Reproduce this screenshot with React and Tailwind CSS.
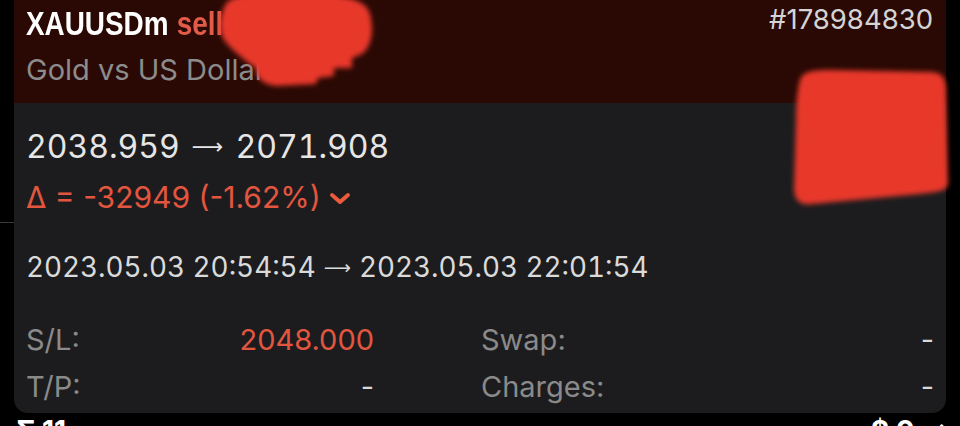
import React from "react";

const inter = { fontFamily: "Inter, 'Liberation Sans', sans-serif" };
const lib = { fontFamily: "'Liberation Sans', Arial, sans-serif" };
const dv = { fontFamily: "'DejaVu Sans', sans-serif" };

function Arrow({ cls }) {
  return (
    <span className={cls} style={dv}>
      ⟶
    </span>
  );
}

function Blobs() {
  return (
    <svg
      className="absolute left-0 top-0 pointer-events-none"
      width="960"
      height="426"
      viewBox="0 0 960 426"
    >
      <defs>
        <filter id="bl" x="-20%" y="-20%" width="140%" height="140%">
          <feGaussianBlur stdDeviation="2.5" />
        </filter>
      </defs>
      <g fill="#e8392b" filter="url(#bl)">
        <path d="M224 8 C228 -6 256 -8 300 -6 C340 -6 366 -2 370 14 C374 30 372 46 362 54 L352 58 L352 68 L334 68 L334 76 L318 78 L316 84 L276 86 C262 84 256 78 256 68 C244 60 232 50 224 40 C218 30 220 16 224 8 Z" />
        <path d="M800 80 C802 72 812 70 830 70 L930 72 C942 72 946 78 946 90 L948 184 C946 192 936 192 920 194 L812 204 C798 206 794 198 794 188 L796 120 C796 100 798 88 800 80 Z" />
      </g>
    </svg>
  );
}

export default function App() {
  return (
    <div className="relative w-[960px] h-[426px] overflow-hidden bg-black">
      <div className="absolute left-0 top-[222px] w-[14px] h-px bg-[#3a3a3a]" />
      <div className="px-[14px]">
        <div className="h-[413px] bg-[#1c1c1e] rounded-b-[14px] overflow-hidden">
          <div className="h-[103px] bg-[#2a0904] pl-[12px] pr-[13px] flex justify-between items-start">
            <div className="flex flex-col">
              <div
                className="mt-[6px] text-[34px] leading-none font-bold flex gap-[10px] origin-left scale-x-[0.82] whitespace-nowrap"
                style={lib}
              >
                <span className="text-white">XAUUSDm</span>
                <span className="text-[#e25a48]">sell</span>
              </div>
              <div className="mt-[15px] text-[29px] leading-none text-[#8c8c8c]" style={inter}>
                Gold vs US Dollar
              </div>
            </div>
            <div className="mt-[6px] text-[27.5px] leading-none text-[#d4d4d4]" style={inter}>
              #178984830
            </div>
          </div>
          <div className="px-[12px]" style={inter}>
            <div className="pt-[28px] text-[32px] leading-none text-[#e6e6e6] whitespace-nowrap flex items-baseline tabular-nums">
              <span>2038.959</span>
              <Arrow cls="text-[22px] mx-[12px] relative top-[-4px]" />
              <span>2071.908</span>
            </div>
            <div className="mt-[19px] flex items-center text-[30px] leading-none text-[#e2563f]">
              <span>Δ = -32949 (-1.62%)</span>
              <svg width="22" height="14" viewBox="0 0 22 14" className="ml-[8px] mt-[4px]">
                <polyline points="3,3 11,10 19,3" fill="none" stroke="#ea5a3c" strokeWidth="4" strokeLinecap="round" strokeLinejoin="round" />
              </svg>
            </div>
            <div className="mt-[42px] text-[27.8px] leading-none text-[#dadada] whitespace-nowrap flex items-baseline tabular-nums">
              <span>2023.05.03 20:54:54</span>
              <Arrow cls="text-[19px] mx-[8px] relative top-[-3px]" />
              <span>2023.05.03 22:01:54</span>
            </div>
            <div className="mt-[43px] grid grid-cols-[348px_1fr] gap-x-[107px] gap-y-[18px] text-[29px] leading-none">
              <div className="flex justify-between">
                <span className="text-[#8a8a8a]">S/L:</span>
                <span className="text-[#e2563f]">2048.000</span>
              </div>
              <div className="flex justify-between">
                <span className="text-[#8a8a8a]">Swap:</span>
                <span className="text-[#dadada]">-</span>
              </div>
              <div className="flex justify-between">
                <span className="text-[#8a8a8a]">T/P:</span>
                <span className="text-[#dadada]">-</span>
              </div>
              <div className="flex justify-between">
                <span className="text-[#8a8a8a]">Charges:</span>
                <span className="text-[#dadada]">-</span>
              </div>
            </div>
          </div>
        </div>
        <div className="flex justify-between mt-[4px] text-[28px] leading-none font-bold text-white" style={inter}>
          <span className="pl-[2px]">Σ 11 ···</span>
          <span>$ 0 ✓</span>
        </div>
      </div>
      <Blobs />
    </div>
  );
}
